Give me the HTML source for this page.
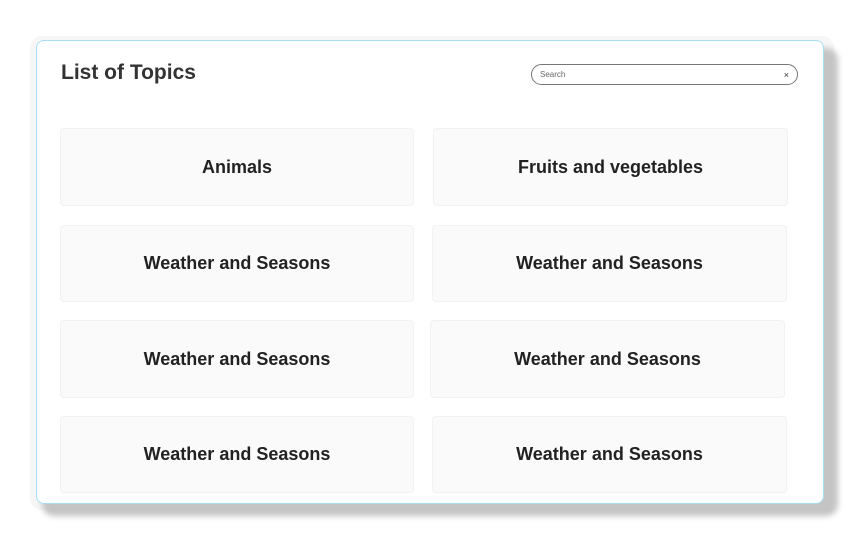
<!DOCTYPE html>
<html><head><style>
body{margin:0;width:861px;height:540px;background:#fff;position:relative;overflow:hidden;font-family:"Liberation Sans",sans-serif;}
.outer{position:absolute;left:30px;top:36px;width:804px;height:474px;background:#f6f6f6;border-radius:12px;}
.shadow{position:absolute;left:42px;top:48px;width:796px;height:468px;background:#c4c4c4;border-radius:12px;filter:blur(3px);}
.card{position:absolute;left:36px;top:40px;width:786px;height:462px;background:#fff;border:1px solid #a8ddf5;border-radius:8px;}
h1{position:absolute;left:61px;top:61px;margin:0;font-size:21px;font-weight:bold;color:#333;}
.search{position:absolute;left:531px;top:64px;width:267px;height:21px;border:1px solid #777;border-radius:11px;background:#fff;font-size:8px;color:#666;line-height:20px;box-sizing:border-box;padding-left:8px;}
.search span{position:absolute;right:8px;top:0;font-size:9px;color:#333;}
.t{position:absolute;background:#fafafa;border:1px solid #f2f2f2;border-radius:4px;display:flex;align-items:center;justify-content:center;font-size:18px;font-weight:bold;color:#222;box-sizing:border-box;}
</style></head><body>
<div class="outer"></div>
<div class="shadow"></div>
<div class="card"></div>
<h1>List of Topics</h1>
<div class="search">Search<span>×</span></div>
<div class="t" style="left:60px;top:128px;width:354px;height:78px">Animals</div>
<div class="t" style="left:433px;top:128px;width:355px;height:78px">Fruits and vegetables</div>
<div class="t" style="left:60px;top:225px;width:354px;height:77px">Weather and Seasons</div>
<div class="t" style="left:432px;top:225px;width:355px;height:77px">Weather and Seasons</div>
<div class="t" style="left:60px;top:320px;width:354px;height:78px">Weather and Seasons</div>
<div class="t" style="left:430px;top:320px;width:355px;height:78px">Weather and Seasons</div>
<div class="t" style="left:60px;top:416px;width:354px;height:77px">Weather and Seasons</div>
<div class="t" style="left:432px;top:416px;width:355px;height:77px">Weather and Seasons</div>
</body></html>
